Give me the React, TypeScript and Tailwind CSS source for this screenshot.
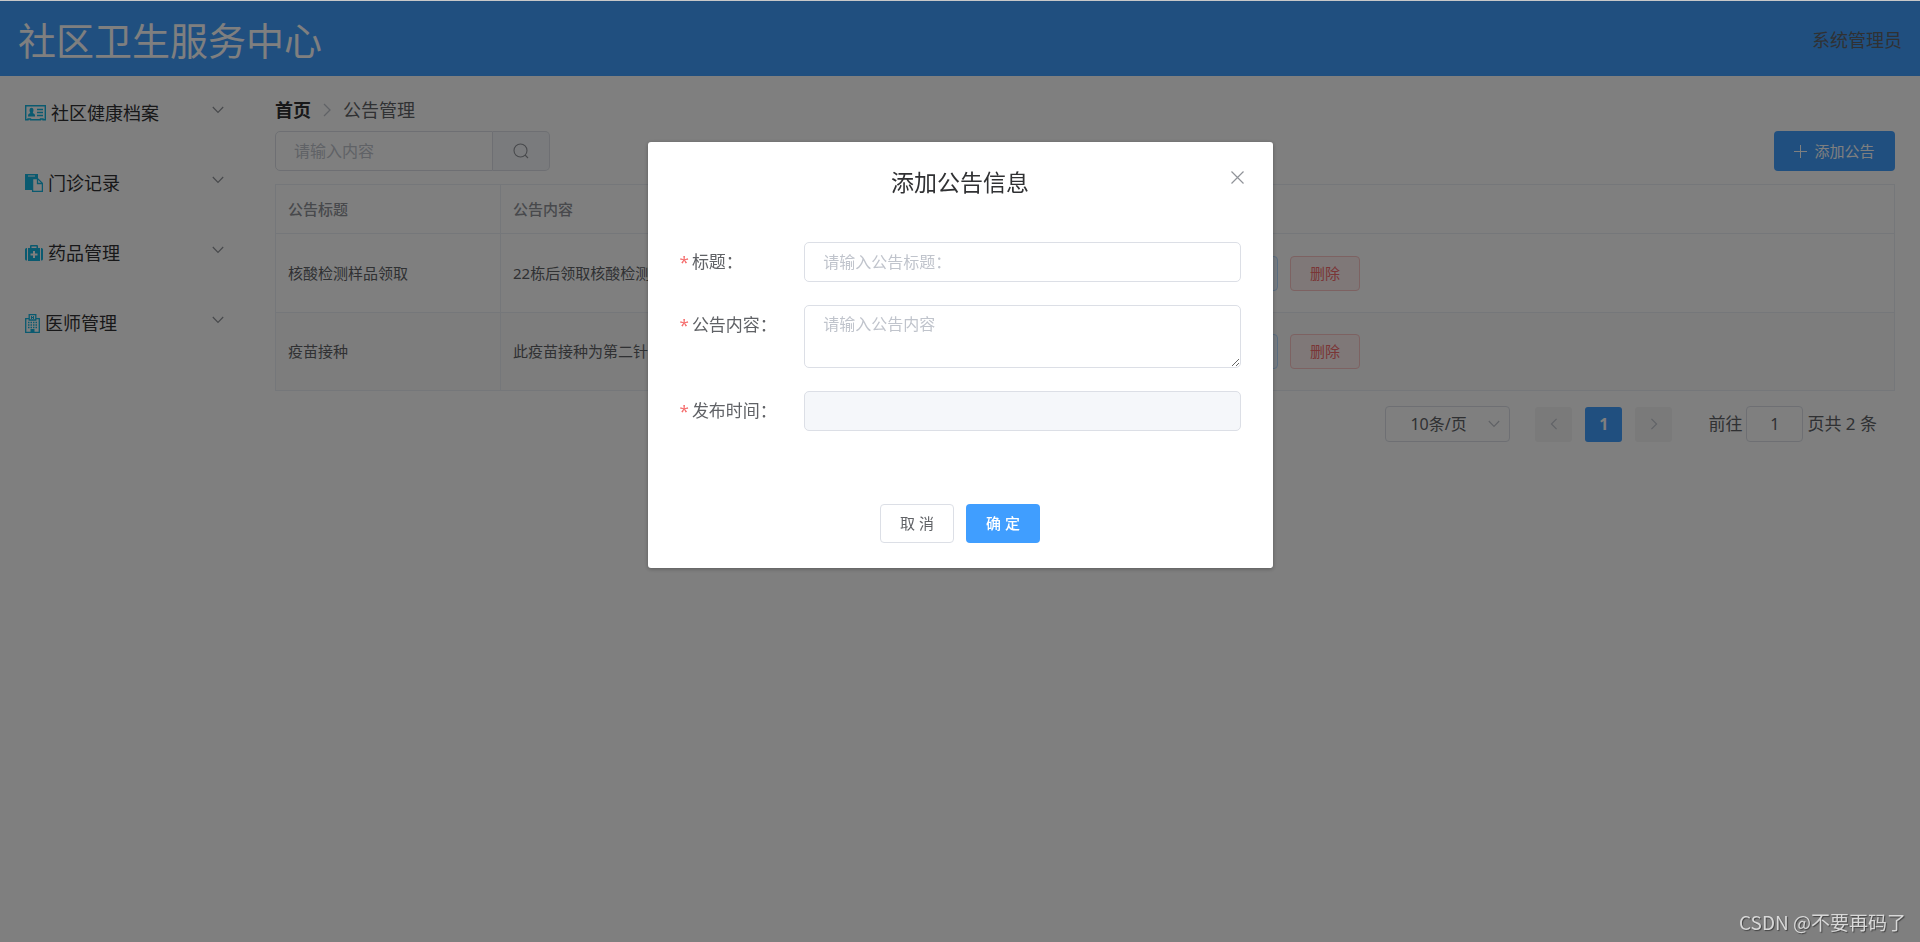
import { useState } from 'react';

type IconProps = { className?: string };

function IdCardIcon() {
  return (
    <svg viewBox="0 0 21 16" className="h-4 w-[21px]" fill="none" stroke="#14b4e0" aria-hidden="true">
      <path d="M.7.7h19.600v14.100h-2.300v-.8h-2.500v.8H5.500v-.8H3v.8H.7z" strokeWidth="1.4" />
      <path d="M3 11.500c0-2 .8-3 2.400-3.400C4 6 4.300 2.800 6.500 2.800S9 6 7.700 8.100c1.600.4 2.400 1.400 2.400 3.400z" fill="#14b4e0" stroke="none" />
      <path d="M12 4.500h6M12 7.500h6M12 10.500h6" strokeWidth="1.400" />
    </svg>
  );
}

function PasteIcon() {
  return (
    <svg viewBox="0 0 18 18" className="size-[18px]" fill="none" aria-hidden="true">
      <path d="M0 0h13v4H7v12H0z" fill="#14b4e0" />
      <path d="M3 2h7" stroke="#fff" />
      <path d="M7.600 4.600h5l4.800 4.800v8H7.600z" fill="#fff" stroke="#14b4e0" strokeWidth="1.3" />
      <path d="M12.500 5v4.500H17" stroke="#14b4e0" strokeWidth="1.300" />
    </svg>
  );
}

function MedkitIcon() {
  return (
    <svg viewBox="0 0 18 16" className="h-4 w-[18px]" fill="#14b4e0" aria-hidden="true">
      <path d="M2 3v12.500H1.500Q0 15.500 0 14V4.500Q0 3 1.500 3zM16 3v12.500h.5q1.500 0 1.500-1.500V4.500Q18 3 16.500 3z" />
      <path d="M3 3h2V1q0-1 1-1h6q1 0 1 1v2h2v13H3zm3.500 0h5V1.500h-5zM8 6v2.500H5.500v2H8V13h2v-2.500h2.500v-2H10V6z" fillRule="evenodd" />
    </svg>
  );
}

function HospitalIcon() {
  return (
    <svg viewBox="0 0 15 19" className="h-[19px] w-[15px]" fill="none" stroke="#14b4e0" aria-hidden="true">
      <path d="M4.500 4.600H.7v13.700h13.600V4.600h-3.800M4.200 6V.6h6.600V6z" strokeWidth="1.3" />
      <path d="M6.500 2v3M8.500 2v3M6.500 3.500h2" />
      <path d="M5.500 15h4v3.500h-4z" fill="#14b4e0" stroke="none" />
      <path d="M3 8.500h9.500M3 11h9.500M3 13.500h9.500" strokeDasharray="1.500 1" strokeWidth="1.400" />
    </svg>
  );
}

function ChevronDown({ className }: IconProps) {
  return (
    <svg viewBox="0 0 12 8" className={className} fill="none" stroke="currentColor" strokeWidth="1.2" aria-hidden="true">
      <path d="M.8 1 6 6.500 11.200 1" />
    </svg>
  );
}

function ChevronRight({ className }: IconProps) {
  return (
    <svg viewBox="0 0 8 14" className={className} fill="none" stroke="currentColor" strokeWidth="1.3" aria-hidden="true">
      <path d="m1 1 6 6-6 6" />
    </svg>
  );
}

const menus = [
  { label: '社区健康档案', icon: <IdCardIcon /> },
  { label: '门诊记录', icon: <PasteIcon /> },
  { label: '药品管理', icon: <MedkitIcon /> },
  { label: '医师管理', icon: <HospitalIcon /> },
];

const notices = [
  { title: '核酸检测样品领取', content: '22栋后领取核酸检测样品', time: '2022-05-10' },
  { title: '疫苗接种', content: '此疫苗接种为第二针', time: '2022-05-12' },
];

const cell = 'border-r border-b border-[#ebeef5] px-3 text-left';

function Header() {
  return (
    <header className="flex h-[76px] items-center justify-between border-t border-[#c8c8c8] bg-[#409eff] px-[18px] pt-[2px]">
      <h1 className="text-[38px] leading-[48px] text-white">社区卫生服务中心</h1>
      <span className="text-lg text-[#606266]">系统管理员</span>
    </header>
  );
}

function Sidebar() {
  return (
    <nav className="w-[250px] shrink-0 pt-[2px]">
      {menus.map((menu) => (
        <button key={menu.label} type="button" className="flex h-[70px] w-full items-center gap-[5px] pr-[26px] pl-[25px] text-lg text-[#303133]">
          {menu.icon}
          <span>{menu.label}</span>
          <ChevronDown className="mb-[6px] ml-auto h-2 w-3 text-[#909399]" />
        </button>
      ))}
    </nav>
  );
}

function NoticeTable() {
  return (
    <table className="mt-[13px] w-full table-fixed border-separate border-spacing-0 border-t border-l border-[#ebeef5] text-[15px] text-[#606266]">
      <colgroup>
        <col className="w-[225px]" />
        <col className="w-[375px]" />
        <col className="w-[320px]" />
        <col />
      </colgroup>
      <thead>
        <tr className="h-[49px] text-[#909399]">
          <th className={`${cell} font-medium`}>公告标题</th>
          <th className={`${cell} font-medium`}>公告内容</th>
          <th className={`${cell} font-medium`}>发布时间</th>
          <th className={cell} aria-label="操作" />
        </tr>
      </thead>
      <tbody>
        {notices.map((notice) => (
          <tr key={notice.title} className="h-[78px] first:h-[79px] even:bg-[#fafafa]">
            <td className={cell}>{notice.title}</td>
            <td className={cell}>{notice.content}</td>
            <td className={cell}>{notice.time}</td>
            <td className={cell}>
              <div className="flex gap-3">
                <button type="button" className="h-[35px] w-[70px] rounded-[4px] border border-[#b3d8ff] bg-[#ecf5ff] text-[#409eff]">
                  编辑
                </button>
                <button type="button" className="h-[35px] w-[70px] rounded-[4px] border border-[#fbc4c4] bg-[#fef0f0] text-[#f56c6c]">
                  删除
                </button>
              </div>
            </td>
          </tr>
        ))}
      </tbody>
    </table>
  );
}

function Pagination() {
  return (
    <div className="mt-[15px] flex items-center justify-end pr-[18px] text-base text-[#606266]">
      <div className="relative mr-[25px]">
        <select aria-label="每页条数" className="h-9 w-[125px] appearance-none rounded-[4px] border border-[#dcdfe6] pl-6">
          <option>10条/页</option>
        </select>
        <ChevronDown className="pointer-events-none absolute top-[14px] right-[10px] h-2 w-3 text-[#c0c4cc]" />
      </div>
      <div className="flex gap-[13px]">
        <button type="button" aria-label="上一页" className="flex h-[35px] w-[37px] items-center justify-center rounded-[3px] bg-[#f4f4f5]">
          <ChevronRight className="h-3 w-2 rotate-180 text-[#c0c4cc]" />
        </button>
        <button type="button" className="h-[35px] w-[37px] rounded-[3px] bg-[#409eff] font-bold text-white">
          1
        </button>
        <button type="button" aria-label="下一页" className="flex h-[35px] w-[37px] items-center justify-center rounded-[3px] bg-[#f4f4f5]">
          <ChevronRight className="h-3 w-2 text-[#c0c4cc]" />
        </button>
      </div>
      <label className="ml-9 flex items-center gap-1 text-[17px]">
        前往
        <input defaultValue="1" className="h-9 w-[57px] rounded-[4px] border border-[#dcdfe6] text-center text-base" />
        页共 2 条
      </label>
    </div>
  );
}

function NoticeDialog({ onClose }: { onClose: () => void }) {
  const field = 'w-[437px] rounded-[5px] border border-[#dcdfe6] px-[18px] text-base placeholder:text-[#c0c4cc]';
  const label = 'flex h-10 w-[125px] items-center gap-[3px] text-[17px] text-[#606266]';

  return (
    <div className="fixed inset-x-0 top-px bottom-0 flex items-start justify-center bg-black/50 pt-[141px]">
      <div role="dialog" aria-labelledby="dialog-title" className="relative w-[625px] rounded-[3px] bg-white px-8 pt-6 pb-[25px] shadow-[0_1px_4px_rgba(0,0,0,0.3)]">
        <h2 id="dialog-title" className="text-center text-[23px] leading-8 text-[#303133]">
          添加公告信息
        </h2>
        <button type="button" aria-label="关闭" onClick={onClose} className="absolute top-[29px] right-[29px] text-[#909399]">
          <svg viewBox="0 0 13 13" className="size-[13px]" fill="none" stroke="currentColor" strokeWidth="1.2">
            <path d="m.5.500 12 12M12.500.500l-12 12" />
          </svg>
        </button>

        <form className="mt-11 flex flex-col gap-[23px]" onSubmit={(e) => e.preventDefault()}>
          <div className="flex">
            <label htmlFor="title" className={label}>
              <span className="text-[#f56c6c]">*</span>标题：
            </label>
            <input id="title" placeholder="请输入公告标题：" className={`${field} h-10`} />
          </div>
          <div className="flex">
            <label htmlFor="content" className={label}>
              <span className="text-[#f56c6c]">*</span>公告内容：
            </label>
            <textarea id="content" placeholder="请输入公告内容" className={`${field} h-[63px] resize-y py-[6px] leading-6`} />
          </div>
          <div className="flex">
            <label htmlFor="time" className={label}>
              <span className="text-[#f56c6c]">*</span>发布时间：
            </label>
            <input id="time" disabled className={`${field} h-10 bg-[#f5f7fa]`} />
          </div>
          <div className="mt-[50px] flex justify-center gap-3 text-[15px]">
            <button type="button" onClick={onClose} className="h-[39px] w-[74px] rounded-[4px] border border-[#dcdfe6] text-[#606266]">
              取 消
            </button>
            <button type="submit" className="h-[39px] w-[74px] rounded-[4px] bg-[#409eff] font-medium text-white">
              确 定
            </button>
          </div>
        </form>
      </div>
    </div>
  );
}

export default function App() {
  const [open, setOpen] = useState(true);

  return (
    <div className="flex min-h-screen flex-col bg-white font-['Noto_Sans','Noto_Sans_CJK_SC',sans-serif]">
      <Header />
      <div className="flex flex-1">
        <Sidebar />
        <main className="min-w-0 flex-1 px-[25px] pt-5">
          <div className="flex h-7 items-center gap-3 text-lg">
            <a href="#" className="font-bold text-[#303133]">首页</a>
            <ChevronRight className="h-[14px] w-2 text-[#c0c4cc]" />
            <span className="text-[#606266]">公告管理</span>
          </div>
          <div className="mt-[7px] flex justify-between">
            <form className="flex h-10 w-[275px]" onSubmit={(e) => e.preventDefault()}>
              <input
                aria-label="搜索公告"
                placeholder="请输入内容"
                className="w-[218px] rounded-l-[5px] border border-[#dcdfe6] px-[18px] text-base placeholder:text-[#c0c4cc]"
              />
              <button type="submit" aria-label="搜索" className="flex flex-1 items-center justify-center rounded-r-[5px] border border-l-0 border-[#dcdfe6] bg-[#f5f7fa] text-[#909399]">
                <svg viewBox="0 0 16 16" className="size-4" fill="none" stroke="currentColor" strokeWidth="1.1">
                  <circle cx="7.500" cy="7.500" r="6.500" />
                  <path d="m12 12 3 3" />
                </svg>
              </button>
            </form>
            <button type="button" onClick={() => setOpen(true)} className="flex h-10 w-[121px] items-center justify-center gap-[7px] rounded-[4px] bg-[#409eff] text-[15px] text-white">
              <svg viewBox="0 0 13 13" className="size-[13px]" stroke="currentColor">
                <path d="M0 6.500h13M6.500 0v13" />
              </svg>
              添加公告
            </button>
          </div>
          <NoticeTable />
          <Pagination />
        </main>
      </div>
      {open && <NoticeDialog onClose={() => setOpen(false)} />}
      <p className="fixed right-[14px] bottom-[6px] font-['Noto_Sans_CJK_SC',sans-serif] text-[19px] leading-7 text-[#d8d8d8] [text-shadow:1px_1px_1px_#444]">
        CSDN @不要再码了
      </p>
    </div>
  );
}
